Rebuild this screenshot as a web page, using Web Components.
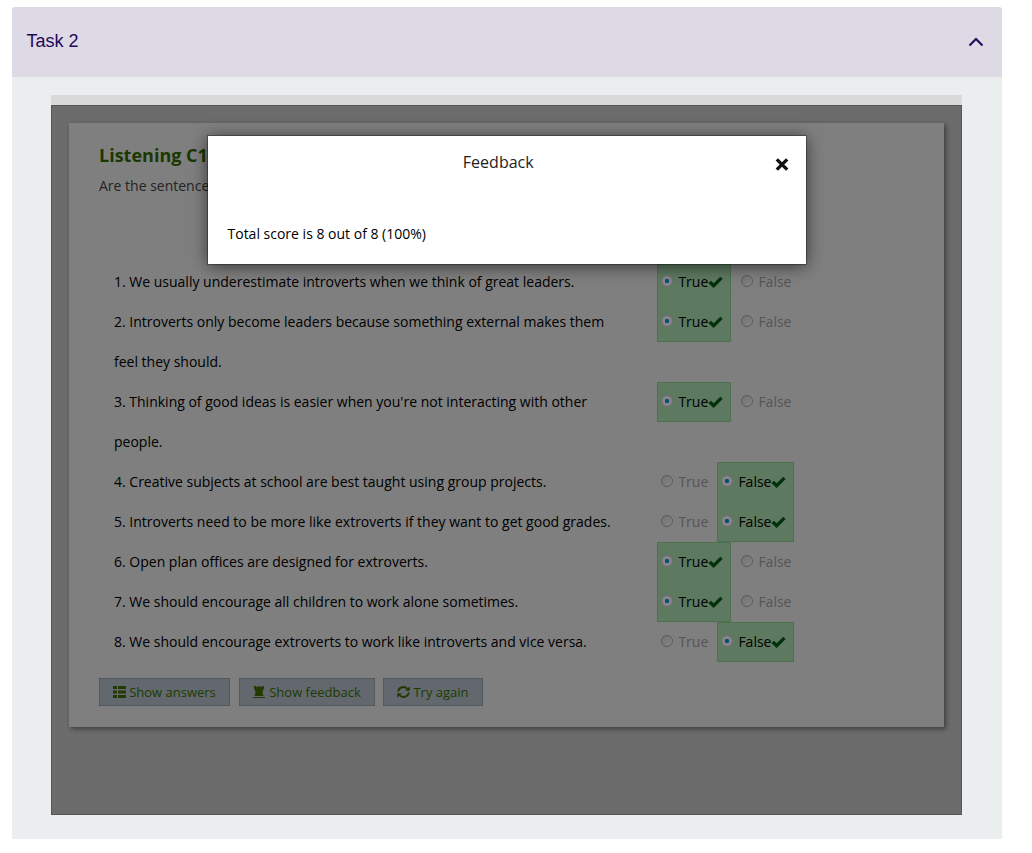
<!DOCTYPE html>
<html lang="en">
<head>
<meta charset="utf-8">
<title>Task 2</title>
<style>
html,body{margin:0;background:#fff}
body{height:853px;overflow:hidden;font-family:"Open Sans",sans-serif}
</style>
</head>
<body>
<task-accordion heading="Task 2">
  <quiz-stage>
    <quiz-card>
      <quiz-question answer="true">1. We usually underestimate introverts when we think of great leaders.</quiz-question>
      <quiz-question answer="true" edge="bottom">2. Introverts only become leaders because something external makes them<br>feel they should.</quiz-question>
      <quiz-question answer="true" edge="top bottom">3. Thinking of good ideas is easier when you're not interacting with other<br>people.</quiz-question>
      <quiz-question answer="false" edge="top">4. Creative subjects at school are best taught using group projects.</quiz-question>
      <quiz-question answer="false" edge="bottom">5. Introverts need to be more like extroverts if they want to get good grades.</quiz-question>
      <quiz-question answer="true" edge="top">6. Open plan offices are designed for extroverts.</quiz-question>
      <quiz-question answer="true" edge="bottom">7. We should encourage all children to work alone sometimes.</quiz-question>
      <quiz-question answer="false" edge="top bottom">8. We should encourage extroverts to work like introverts and vice versa.</quiz-question>
      <quiz-button slot="actions" icon="list" style="width:131px;margin-right:1px">Show answers</quiz-button>
      <quiz-button slot="actions" icon="tower" style="width:136px">Show feedback</quiz-button>
      <quiz-button slot="actions" icon="refresh" style="width:100px">Try again</quiz-button>
    </quiz-card>
    <feedback-dialog slot="dialog" heading="Feedback">Total score is 8 out of 8 (100%)</feedback-dialog>
  </quiz-stage>
</task-accordion>
<script>
class Base extends HTMLElement {
  constructor() {
    super();
    this.attachShadow({ mode: 'open' });
  }
  connectedCallback() { this.shadowRoot.innerHTML = this.render(); }
}

customElements.define('task-accordion', class extends Base {
  render() { return `<style>
:host{display:block;padding:7px 30px 0 12px}
header{height:70px;box-sizing:border-box;display:flex;justify-content:space-between;align-items:center;padding:0 18px 2px 14.5px;background:#dedae5;border-radius:3px 3px 0 0;color:#23085a;font:18px/24px "Liberation Sans",sans-serif}
svg{display:block;margin-top:2px}
section{background:#eaeeef;height:762px;box-sizing:border-box;padding:18px 40px 24px 39px}
</style>
<header><span>${this.getAttribute('heading')}</span><svg width="16" height="10" viewBox="0 0 16 10"><path d="M1.500 8.500 8 2l6.500 6.500" fill="none" stroke="#23085a" stroke-width="2"/></svg></header>
<section><slot></slot></section>`; }
});

customElements.define('quiz-stage', class extends Base {
  render() { return `<style>
:host{display:block;position:relative;height:720px}
.strip{height:10px;background:#d9d9d9}
.body{height:710px;box-sizing:border-box;background:#6c6c6c;border:1px solid #565656;padding:17px}
.over{position:absolute;left:157px;top:41px}
</style><div class="strip"></div><div class="body"><slot></slot></div><div class="over"><slot name="dialog"></slot></div>`; }
});

customElements.define('quiz-card', class extends Base {
  render() { return `<style>
:host{display:block;width:875px;height:604px;box-sizing:border-box;padding:18px 30px 0;background:#7f7f7f;box-shadow:2px 2px 5px rgba(0,0,0,.45)}
h1{margin:0;font-size:18px;line-height:28px;font-weight:700;color:#1a3800}
p{margin:3px 0 0;font-size:14px;line-height:28px;color:#242424}
.rows{margin:62px 0 0 15px}
.actions{display:flex;margin-top:16px;gap:8px}
</style><h1>Listening C1</h1><p>Are the sentences</p><div class="rows"><slot></slot></div><div class="actions"><slot name="actions"></slot></div>`; }
});

customElements.define('quiz-question', class extends Base {
  render() {
    const a = this.getAttribute('answer');
    const on = `checked edge="${this.getAttribute('edge') || ''}"`;
    return `<style>
:host{display:grid;grid-template-columns:543px 1fr;font-size:14px;line-height:40px;color:#000}
.opts{display:flex}
</style><div><slot></slot></div><div class="opts"><quiz-option label="True" ${a === 'true' ? on : ''}></quiz-option><quiz-option label="False" ${a === 'false' ? on : ''}></quiz-option></div>`;
  }
});

customElements.define('quiz-option', class extends Base {
  render() {
    const on = this.hasAttribute('checked');
    const edge = this.getAttribute('edge') || '';
    const isTrue = this.getAttribute('label') === 'True';
    const w = on ? (isTrue ? 74 : 77) : 60;
    const lines = ['inset 1px 0 #4d7250', 'inset -1px 0 #4d7250'];
    if (edge.includes('top')) lines.push('inset 0 1px #4d7250');
    if (edge.includes('bottom')) lines.push('inset 0 -1px #4d7250');
    return `<style>
:host{display:flex;align-items:center;height:40px;box-sizing:border-box;width:${w}px;padding-left:4px;white-space:nowrap;color:${on ? '#000' : '#555'};${on ? `background:#5d7960;box-shadow:${lines.join()};margin-right:6px` : ''}}
i{flex:none;width:12px;height:12px;box-sizing:border-box;border-radius:50%;border:1px solid ${on ? '#6f6f73' : '#5c5c5c'};background:${on ? 'radial-gradient(circle,#064d78 0 1.700px,#858589 2.500px)' : 'linear-gradient(135deg,#737373,#858585)'};margin:-3px 5.400px 0 0}
svg{flex:none;margin-top:1px}
</style><i></i><span>${this.getAttribute('label')}</span>${on ? '<svg width="15" height="13" viewBox="0 0 15 13"><path d="M.4 7.200 2.900 4.700 5.700 7.300 12.300.7 14.700 3 5.700 12Z" fill="#00330b"/></svg>' : ''}`;
  }
});

const icons = {
  list: '<path d="M0 0h4v3H0zM5 0h8v3H5zM0 4.500h4v3H0zM5 4.500h8v3H5zM0 9h4v3H0zM5 9h8v3H5z"/>',
  tower: '<path d="M1 0h2v1h1.200V0h1.300v1h1.200V0H8v1h1.200V0H11v3L9.700 4.500V8l1 2h-9.400l1-2V4.500L1 3zM0 11h12v1H0z"/>',
  refresh: '<path d="M1.200 5.500A5.200 5 0 0 1 10.500 3M11.800 6.500A5.200 5 0 0 1 2.500 9" fill="none" stroke="#233b00" stroke-width="1.900"/><path d="M12.800.3v4.500H8.200zM.2 11.700V7.200h4.600z"/>'
};
customElements.define('quiz-button', class extends Base {
  render() { return `<style>
:host{display:flex;align-items:center;justify-content:center;height:28px;box-sizing:border-box;background:#62686d;border:1px solid #51585e;color:#1d3b00;font-size:13px;line-height:26px;white-space:nowrap}
svg{margin-right:3px}
</style><svg width="13" height="12" viewBox="0 0 13 12" fill="#233b00">${icons[this.getAttribute('icon')]}</svg><span><slot></slot></span>`; }
});

customElements.define('feedback-dialog', class extends Base {
  render() { return `<style>
:host{display:block;width:598px;height:128px;box-sizing:border-box;background:#fff;box-shadow:0 0 0 1px rgba(0,0,0,.3),0 2px 16px rgba(0,0,0,.6);padding:14px 17px 0 19.500px}
header{display:grid;grid-template-columns:1fr auto 1fr;align-items:center;height:24px;font-size:16px;color:#222}
b{font-weight:400;margin:0 20px 0 0}
svg{justify-self:end;margin-top:5px}
p{margin:46px 0 0;font-size:14px;line-height:28px;color:#000}
</style><header><span></span><b>${this.getAttribute('heading')}</b><svg width="14" height="13" viewBox="0 0 14 13"><path d="M1.800 1.300 12.200 11.700M12.200 1.300 1.800 11.700" stroke="#111" stroke-width="3.300"/></svg></header><p><slot></slot></p>`; }
});
</script>
</body>
</html>
